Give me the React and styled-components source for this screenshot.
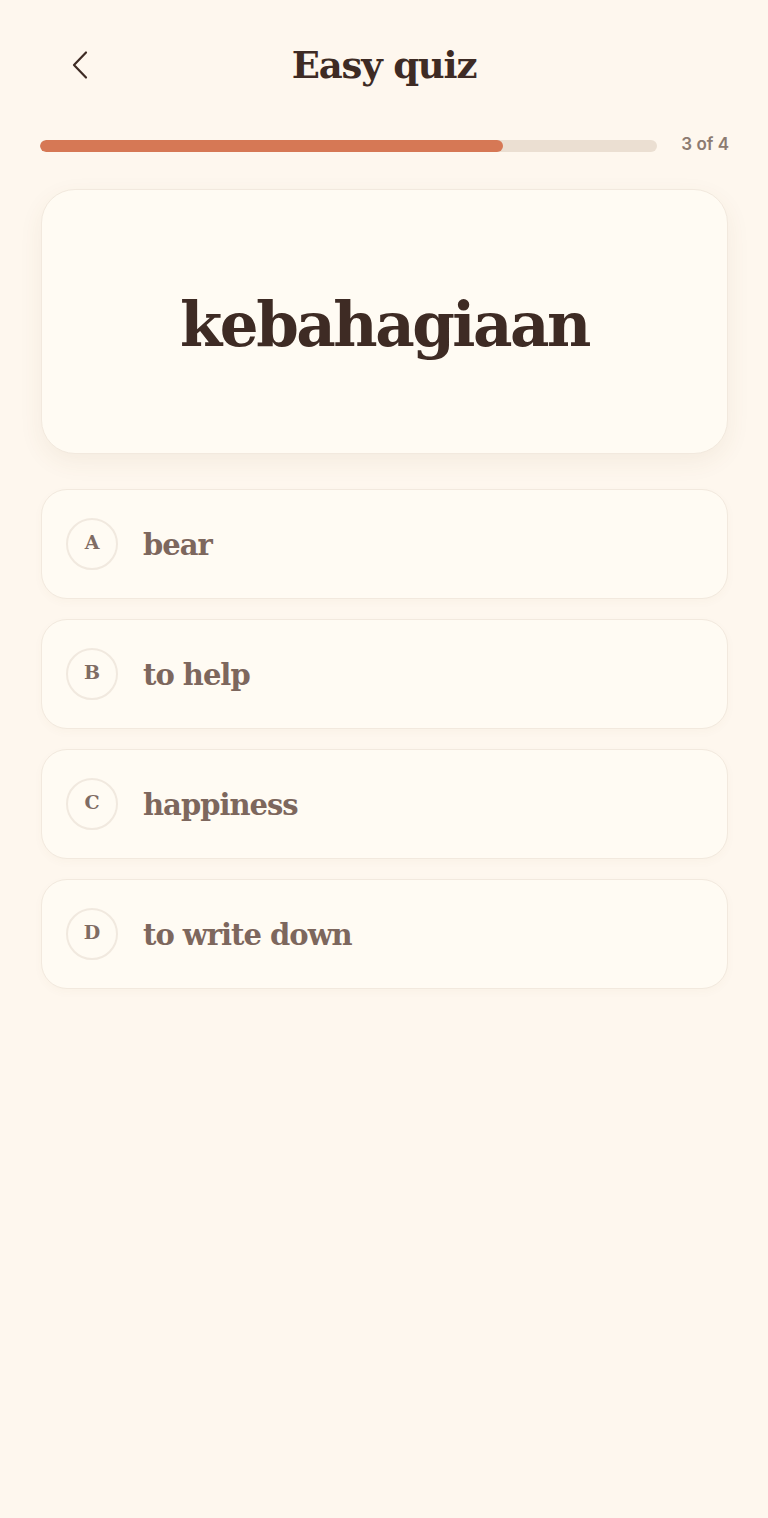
import React from 'react'
import styled, { createGlobalStyle } from 'styled-components'

const GlobalStyle = createGlobalStyle`
    html, body {
        margin: 0;
        padding: 0;
        background: #fef7ee;
    }
    body {
        font-family: "DejaVu Serif", "Liberation Serif", serif;
    }
`

const Page = styled.div`
    min-height: 1518px;
    padding: 0 40px;
    box-sizing: border-box;
    background: #fef7ee;
`

const Header = styled.header`
    display: grid;
    grid-template-columns: 80px 1fr 80px;
    align-items: center;
    height: 130px;
`

const BackButton = styled.button`
    background: none;
    border: none;
    padding: 0 0 0 31px;
    display: flex;
    align-items: center;
    cursor: pointer;
    color: #3e2b24;
`

const Title = styled.h1`
    margin: 0;
    text-align: center;
    font-size: 37px;
    font-weight: 700;
    color: #3e2b24;
    letter-spacing: -1.2px;
`

const ProgressRow = styled.div`
    display: flex;
    align-items: center;
    gap: 24px;
    height: 12px;
    margin-top: 10px;
`

const Track = styled.div`
    flex: 1;
    height: 12px;
    border-radius: 6px;
    background: #ebdfd2;
    overflow: hidden;
`

const Fill = styled.div`
    height: 100%;
    border-radius: 6px;
    background: #d67855;
`

const Count = styled.span`
    font-family: "Inter", "Liberation Sans", sans-serif;
    font-size: 17px;
    line-height: 1;
    font-weight: 600;
    color: #8c7b71;
    width: 48px;
    text-align: right;
    margin-right: -1px;
    margin-bottom: 4px;
`

const WordCard = styled.div`
    margin-top: 37px;
    margin-left: 1px;
    height: 265px;
    border-radius: 34px;
    background: #fffbf3;
    border: 1.5px solid #f2e9de;
    box-shadow: 0 8px 24px rgba(120, 80, 40, 0.07);
    display: flex;
    align-items: center;
    justify-content: center;
    box-sizing: border-box;
`

const Word = styled.h2`
    margin: 6px 0 0;
    font-size: 61px;
    font-weight: 700;
    color: #3e2b24;
    letter-spacing: -2.5px;
`

const Options = styled.div`
    display: flex;
    flex-direction: column;
    gap: 20px;
    margin-top: 35px;
    margin-left: 1px;
`

const Option = styled.button`
    display: flex;
    align-items: center;
    gap: 25px;
    height: 110px;
    padding: 0 24px;
    border-radius: 26px;
    background: #fffbf3;
    border: 1.5px solid #f2e9de;
    box-shadow: 0 3px 10px rgba(120, 80, 40, 0.03);
    cursor: pointer;
    text-align: left;
    box-sizing: border-box;
    font-family: inherit;
`

const Letter = styled.span`
    width: 52px;
    height: 52px;
    border-radius: 50%;
    border: 2px solid #f1e9df;
    box-sizing: border-box;
    display: flex;
    align-items: center;
    justify-content: center;
    font-size: 19px;
    font-weight: 700;
    color: #7f6c63;
    padding-bottom: 4px;
    flex-shrink: 0;
`

const Answer = styled.span`
    font-size: 29px;
    font-weight: 700;
    color: #7d675d;
    letter-spacing: -1px;
    margin-top: 2px;
`

const answers = [
    { key: 'A', text: 'bear' },
    { key: 'B', text: 'to help' },
    { key: 'C', text: 'happiness' },
    { key: 'D', text: 'to write down' },
]

const App = () => {
    const current = 3
    const total = 4
    return (
        <Page>
            <GlobalStyle />
            <Header>
                <BackButton aria-label="Back">
                    <svg width="18" height="30" viewBox="0 0 18 30" fill="none">
                        <path d="M15 2.5 L3 15 L15 27.5" stroke="#3e2b24" strokeWidth="2.2" strokeLinecap="round" strokeLinejoin="round" />
                    </svg>
                </BackButton>
                <Title>Easy quiz</Title>
                <span />
            </Header>
            <ProgressRow>
                <Track>
                    <Fill style={{ width: `${(current / total) * 100}%` }} />
                </Track>
                <Count>{current} of {total}</Count>
            </ProgressRow>
            <WordCard>
                <Word>kebahagiaan</Word>
            </WordCard>
            <Options>
                {answers.map(a => (
                    <Option key={a.key}>
                        <Letter>{a.key}</Letter>
                        <Answer>{a.text}</Answer>
                    </Option>
                ))}
            </Options>
        </Page>
    )
}

export default App
